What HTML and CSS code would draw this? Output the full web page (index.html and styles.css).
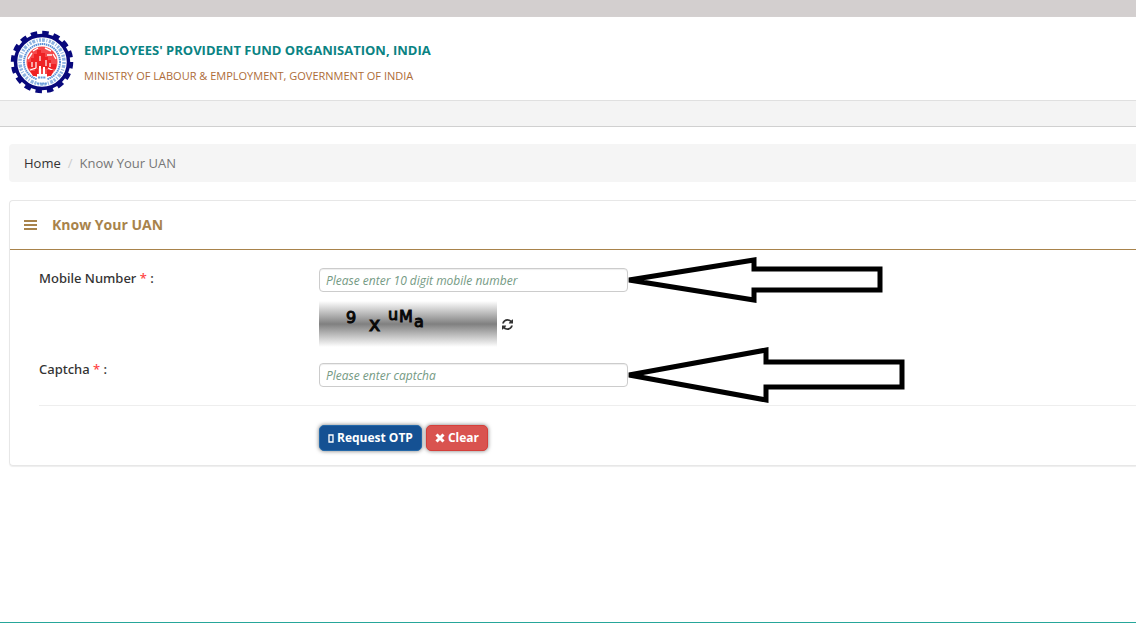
FILE: index.html
```html
<!DOCTYPE html>
<html lang="en">
<head>
<meta charset="utf-8">
<title>Know Your UAN</title>
<link rel="stylesheet" href="styles.css">
</head>
<body>
<div class="topbar"></div>
<header class="header">
  <svg class="logo" viewBox="-32 -32 64 64" role="img" aria-label="EPFO emblem">
    <circle r="29" fill="none" stroke="#08087c" stroke-width="4.5" stroke-dasharray="6.4 4.988"/>
    <circle r="26.500" fill="#fff" stroke="#08087c" stroke-width="3.500"/>
    <circle r="22" fill="none" stroke="#8fb4e2" stroke-width="3.500" stroke-dasharray="2 1 3 1.500 1 1.500"/>
    <circle r="18" fill="none" stroke="#5a90d6" stroke-width="2" stroke-dasharray="1.500 .6"/>
    <circle r="15.500" fill="#f5494b"/>
    <path d="M-14 -3l4-6M-9 -11l5-3M3 -14l6 3M11 -8l3 5M-8 -7h4M5 -7h5" fill="none" stroke="#fff" stroke-width="1.400"/>
    <path d="M-14 6v-6h3v-4h3v-4h3v-4h4v3h4v4h3v3h3v4h5v5z" fill="#ee2224"/>
    <path d="M-10 5v-5M-6 6v-6M4 4v-6M8 5v-4M-12 8l6-2M6 6l6 3M-2 -6v5" stroke="#fff" stroke-width="1.200"/>
    <path d="M-12 9h5v-2h3v7h-5zM5 8h7l-3 6h-4z" fill="#ee2224"/>
    <path d="M-3 4h2v9h-2zM1 5h2v8h-2z" fill="#fff"/>
    <path d="M-5 12h10v9h-10z" fill="#fff"/>
    <path d="M-4 15.500h8M-5 21.500h10" stroke="#689bd9" stroke-width="2" stroke-dasharray="2 .6"/>
  </svg>
  <div class="brand">
    <h1 class="brand-title">EMPLOYEES' PROVIDENT FUND ORGANISATION, INDIA</h1>
    <p class="brand-sub">MINISTRY OF LABOUR &amp; EMPLOYMENT, GOVERNMENT OF INDIA</p>
  </div>
</header>
<div class="navstrip"></div>
<main class="content">
  <nav class="breadcrumb" aria-label="Breadcrumb">
    <a class="crumb-link" href="#">Home</a>
    <span class="crumb-sep">/</span>
    <span>Know Your UAN</span>
  </nav>
  <section class="panel">
    <div class="panel-head">
      <svg class="menu-icon" viewBox="0 0 13 11" aria-hidden="true"><path d="M0 1h13M0 5h13M0 9h13" stroke="currentColor" stroke-width="2"/></svg>
      <h2 class="panel-title">Know Your UAN</h2>
    </div>
    <form class="form">
      <div class="row">
        <label class="label" for="mobile">Mobile Number <span class="req">*</span> :</label>
        <div class="field">
          <input class="input" id="mobile" type="text" placeholder="Please enter 10 digit mobile number">
          <svg class="arrow arrow-mobile" viewBox="0 0 256 46" aria-hidden="true"><path d="M1 23L126 3v9h126v21h-126v10z"/></svg>
        </div>
      </div>
      <div class="captcha-line">
        <svg class="captcha" viewBox="0 0 178 46" role="img" aria-label="Captcha">
          <defs><linearGradient id="shade" x2="0" y2="1"><stop offset="0" stop-color="#fff"/><stop offset=".5" stop-color="#808080"/><stop offset="1" stop-color="#fff"/></linearGradient></defs>
          <rect width="178" height="46" fill="url(#shade)"/>
          <g class="captcha-text"><text x="27" y="22">9</text><text class="captcha-large" x="50" y="30">x</text><text x="69" y="19">u</text><text x="80" y="21">M</text><text x="95" y="26">a</text></g>
        </svg>
        <button class="refresh" type="button" aria-label="Refresh captcha">
          <svg class="refresh-icon" viewBox="0 0 1536 1536" aria-hidden="true"><path fill="currentColor" d="M1511 928q0 5-1 7-64 268-268 434.500T764 1536q-146 0-282.500-55T238 1324l-129 129q-19 19-45 19t-45-19-19-45V960q0-26 19-45t45-19h448q26 0 45 19t19 45-19 45l-137 137q71 66 161 102t187 36q134 0 250-65t186-179q11-17 53-117 8-23 30-23h192q13 0 22.500 9.500t9.500 22.500zM1536 128v448q0 26-19 45t-45 19h-448q-26 0-45-19t-19-45 19-45l138-138Q969 256 768 256q-134 0-250 65T332 500q-11 17-53 117-8 23-30 23H50q-13 0-22.500-9.500T18 608v-7q65-268 270-434.500T768 0q146 0 284 55.500T1297 212l130-129q19-19 45-19t45 19 19 45z"/></svg>
        </button>
      </div>
      <div class="row">
        <label class="label" for="captcha">Captcha <span class="req">*</span> :</label>
        <div class="field field-low">
          <input class="input" id="captcha" type="text" placeholder="Please enter captcha">
          <svg class="arrow arrow-captcha" viewBox="0 0 278 58" aria-hidden="true"><path d="M1 29L138 4v12h136v25h-136v13z"/></svg>
        </div>
      </div>
      <hr class="rule">
      <div class="actions">
        <button class="btn btn-primary" type="button"><svg class="phone-icon" viewBox="0 0 6 9" aria-hidden="true"><path d="M1 1h4v7h-4z" fill="none" stroke="currentColor" stroke-width="1.3"/></svg>Request OTP</button>
        <button class="btn btn-danger" type="button"><svg class="x-icon" viewBox="0 0 10 10" aria-hidden="true"><path d="M1.500 1.500l7 7M8.500 1.500l-7 7" stroke="currentColor" stroke-width="3"/></svg>Clear</button>
      </div>
    </form>
  </section>
</main>
<footer class="footer"></footer>
</body>
</html>
```
FILE: styles.css
```css
* { box-sizing: border-box; }
body {
  margin: 0;
  min-height: 100vh;
  display: flex;
  flex-direction: column;
  overflow-x: hidden;
  background: #fff;
  color: #333;
  font: 13px/20px "Open Sans", "Noto Sans", sans-serif;
}
.topbar { height: 17px; background: #d3cfcf; }
.header {
  display: flex;
  gap: 10px;
  padding: 13px 10px 6px;
  border-bottom: 1px solid #e0e0e0;
  box-shadow: 0 1px 2px #e4e4e4;
}
.logo { width: 64px; height: 64px; }
.brand-title {
  margin: 10px 0 8px;
  font-size: 13px;
  line-height: 20px;
  font-weight: 700;
  color: #0a8383;
}
.brand-sub { margin: 0; font-size: 11px; line-height: 16px; color: #ad6c38; }
.navstrip { height: 26px; background: #f4f4f4; border-bottom: 1px solid #d0d0d0; }
.content { flex: 1; padding: 17px 0 0 9px; }
.breadcrumb {
  display: flex;
  gap: 7px;
  padding: 9px 15px;
  border-radius: 4px 0 0 4px;
  background: #f5f5f5;
  color: #777;
}
.crumb-link { color: #333; text-decoration: none; }
.crumb-sep { color: #ccc; }
.panel {
  margin-top: 18px;
  border: 1px solid #e7e7e7;
  border-right: 0;
  border-radius: 4px 0 0 4px;
  box-shadow: 0 1px 1px #eee;
}
.panel-head {
  display: flex;
  align-items: center;
  gap: 15px;
  padding: 14px;
  border-bottom: 1px solid #a8834b;
  color: #a8834b;
}
.menu-icon { width: 13px; height: 11px; }
.panel-title { margin: 0; font-size: 14px; line-height: 20px; font-weight: 700; }
.form { padding: 18px 0 14px 29px; }
.row { display: flex; align-items: flex-start; }
.label { width: 280px; font-family: "Noto Sans", sans-serif; font-weight: 500; }
.req { color: #f44; }
.field { position: relative; width: 309px; }
.field-low { margin-top: 4px; }
.input {
  display: block;
  width: 100%;
  height: 24px;
  padding: 0 6px;
  border: 1px solid #ccc;
  border-radius: 4px;
  background: #fff;
  box-shadow: inset 0 1px 1px #eee;
  font: 12px/20px "Open Sans", "Noto Sans", sans-serif;
}
.input::placeholder { color: #759a84; opacity: 1; font-style: italic; }
.arrow {
  position: absolute;
  left: 100%;
  top: 50%;
  transform: translateY(-50%);
  fill: #fff;
  stroke: #000;
  stroke-width: 5;
  stroke-linejoin: miter;
  stroke-miterlimit: 3;
}
.arrow-mobile { width: 256px; height: 46px; }
.arrow-captcha { width: 278px; height: 58px; }
.captcha-line {
  display: flex;
  align-items: center;
  gap: 5px;
  margin: 9px 0 12px 280px;
}
.captcha { width: 178px; height: 46px; }
.captcha-text { font: 16px "DejaVu Sans", sans-serif; fill: #080808; stroke: #080808; stroke-width: 1; }
.captcha-large { font-size: 19px; }
.refresh { display: flex; padding: 0; border: 0; background: none; color: #333; }
.refresh-icon { width: 11px; height: 11px; }
.rule { margin: 18px 0 19px; border: 0; border-top: 1px solid #eee; }
.actions { display: flex; gap: 4px; margin-left: 280px; }
.btn {
  display: flex;
  align-items: center;
  gap: 3px;
  padding: 2px 8px;
  border: 1px solid;
  border-radius: 5px;
  box-shadow: 0 0 4px #777;
  color: #fff;
  font: 700 12px/20px "Open Sans", "Noto Sans", sans-serif;
}
.btn-primary { background: #155193; border-color: #2468a8; }
.btn-danger { background: #d9534f; border-color: #d43f3a; }
.phone-icon { width: 6px; height: 9px; }
.x-icon { width: 10px; height: 10px; }
.footer { border-top: 1px solid #26a69a; }
```
